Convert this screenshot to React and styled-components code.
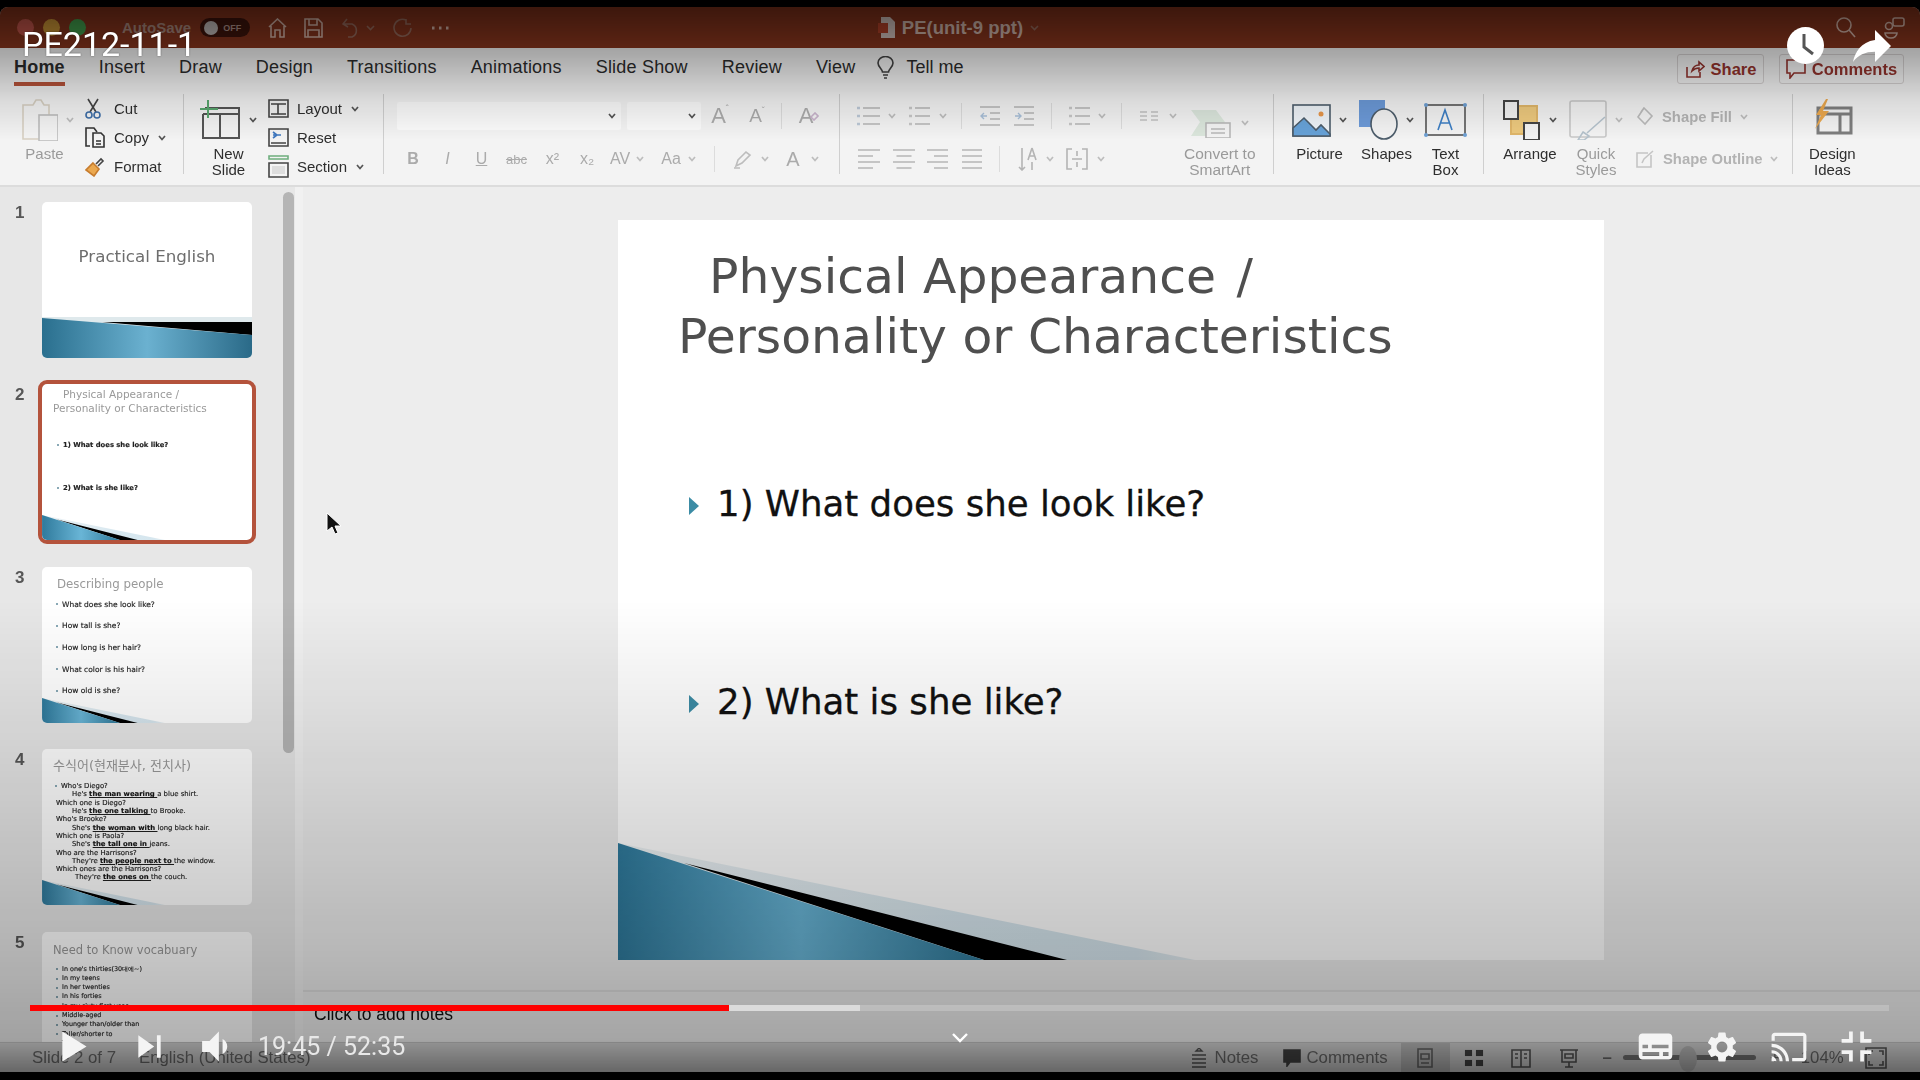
import React from "react";
import styled, { createGlobalStyle } from "styled-components";
import { MdSettings, MdCast } from "react-icons/md";

const Global = createGlobalStyle`
  html, body { margin: 0; padding: 0; background: #000; }
  * { box-sizing: border-box; }
`;

const Screen = styled.div`
  position: relative;
  width: 1920px;
  height: 1080px;
  overflow: hidden;
  background: #000;
  font-family: "Liberation Sans", Arial, sans-serif;
`;

const Video = styled.div`
  display: flex;
  flex-direction: column;
  margin-top: 7px;
  height: 1065px;
  border-radius: 8px 8px 0 0;
  overflow: hidden;
  background: #eee;
  filter: blur(0.6px);
`;

/* title bar */
const TitleBar = styled.div`
  display: grid;
  grid-template-columns: 1fr auto 1fr;
  align-items: center;
  height: 41px;
  flex: none;
  padding: 0 15px 0 17px;
  background: #8a361e;
`;
const TitleLeft = styled.div`
  display: flex;
  align-items: center;
`;
const Light = styled.span`
  width: 17px;
  height: 17px;
  margin-right: 9px;
  border-radius: 50%;
  background: ${(p) => p.$c};
`;
const AutoSave = styled.span`
  margin-left: 27px;
  font-size: 15px;
  font-weight: 700;
  color: #b08c80;
`;
const Toggle = styled.span`
  display: flex;
  align-items: center;
  gap: 5px;
  width: 50px;
  height: 19px;
  margin: 0 18px 0 9px;
  padding-left: 4px;
  border-radius: 10px;
  background: #40150c;
  color: #b89890;
  font-size: 9px;
  font-weight: 700;
  &::before {
    content: "";
    width: 14px;
    height: 14px;
    border-radius: 50%;
    background: #c9c2c0;
  }
`;
const TitleIcon = styled.svg`
  flex: none;
  margin-left: ${(p) => p.$ml || 0}px;
  fill: none;
  stroke: ${(p) => p.$c || "#d9b8ac"};
  stroke-width: 1.6;
`;
const DocTitle = styled.div`
  display: flex;
  align-items: center;
  gap: 7px;
  margin-left: -5px;
  color: #d8bcb2;
  font-size: 18.5px;
  font-weight: 700;
`;
const TitleRight = styled.div`
  display: flex;
  justify-content: flex-end;
  align-items: center;
  gap: 28px;
`;

/* ribbon */
const Ribbon = styled.div`
  flex: none;
  height: 139px;
  background: #f3f3f3;
  border-bottom: 2px solid #dcdcdc;
`;
const TabRow = styled.div`
  display: flex;
  align-items: flex-start;
  gap: 34px;
  height: 39px;
  padding: 0 16px 0 14px;
`;
const Tab = styled.div`
  height: 38px;
  line-height: 38px;
  font-size: 18px;
  letter-spacing: 0.2px;
  color: #2c2c2c;
  font-weight: ${(p) => (p.$active ? 700 : 400)};
  box-shadow: ${(p) => (p.$active ? "inset 0 -4px 0 #b8533a" : "none")};
  white-space: nowrap;
`;
const TellMe = styled(Tab)`
  display: flex;
  align-items: center;
  gap: 12px;
  margin-left: -12px;
  letter-spacing: 0;
`;
const HeadButton = styled.div`
  display: flex;
  align-items: center;
  justify-content: center;
  gap: 6px;
  width: ${(p) => p.$w}px;
  height: 30px;
  margin-top: 6px;
  margin-left: ${(p) => p.$ml};
  border: 1px solid #d4d0d0;
  border-radius: 3px;
  color: #93332d;
  font-size: 16.5px;
  font-weight: 700;
`;
const ToolRow = styled.div`
  display: flex;
  height: 98px;
`;
const Group = styled.div`
  display: flex;
  flex: none;
  width: ${(p) => p.$w}px;
  padding-left: ${(p) => p.$pl}px;
`;
const Sep = styled.div`
  flex: none;
  width: 1px;
  margin: 7px 0 11px;
  background: #cfcfcf;
`;
const Large = styled.div`
  display: flex;
  flex: none;
  flex-direction: column;
  align-items: center;
  margin-left: ${(p) => p.$ml || 0}px;
  padding-top: ${(p) => p.$pt ?? 12}px;
`;
const IconRow = styled.div`
  display: flex;
  align-items: center;
  gap: ${(p) => p.$gap ?? 8}px;
  height: 42px;
  margin-bottom: ${(p) => p.$mb ?? 5}px;
`;
const Label = styled.div`
  padding-right: ${(p) => p.$pr || 0}px;
  font-size: ${(p) => p.$fs || 15}px;
  line-height: 16px;
  text-align: center;
  white-space: nowrap;
  color: ${(p) => (p.$dim ? "#9a9a9a" : "#2e2e2e")};
`;
const SmallCol = styled.div`
  display: flex;
  flex-direction: column;
  flex: none;
  margin-left: ${(p) => p.$ml}px;
  padding-top: 7px;
`;
const SmallRow = styled.div`
  display: flex;
  align-items: center;
  height: 29px;
  font-size: 15px;
  color: #2e2e2e;
`;
const IconBox = styled.span`
  display: flex;
  align-items: center;
  width: 29px;
`;
const ToolCol = styled.div`
  display: flex;
  flex: none;
  flex-direction: column;
  width: ${(p) => p.$w}px;
  padding-top: 15px;
  gap: 15px;
`;
const FillCol = styled(ToolCol)`
  padding-top: 9px;
  gap: 14px;
`;
const ToolLine = styled.div`
  display: flex;
  align-items: center;
  height: 28px;
`;
const Select = styled.div`
  display: flex;
  align-items: center;
  justify-content: flex-end;
  width: ${(p) => p.$w}px;
  height: 28px;
  margin-left: ${(p) => p.$ml || 0}px;
  padding-right: 5px;
  background: #fbfbfb;
  border-radius: 2px;
`;
const Slot = styled.span`
  display: flex;
  flex: none;
  align-items: center;
  justify-content: center;
  width: ${(p) => p.$w}px;
  margin-left: ${(p) => p.$ml || 0}px;
  color: #ababab;
  font-size: ${(p) => p.$fs || 16}px;
  font-weight: ${(p) => p.$fw || 400};
  font-style: ${(p) => p.$fst || "normal"};
  text-decoration: ${(p) => p.$td || "none"};
  white-space: nowrap;
`;
const Tiny = styled.span`
  align-self: flex-start;
  font-size: 9px;
  line-height: 10px;
`;
const MiniSep = styled.span`
  flex: none;
  width: 1px;
  height: 26px;
  margin-left: ${(p) => p.$ml}px;
  background: #dcdcdc;
`;
const Gray = styled.span`
  margin: 0 8px;
  color: #b3b3b3;
  font-size: 14.8px;
  font-weight: 700;
  white-space: nowrap;
`;
const Ico = styled.svg`
  flex: none;
  margin-left: ${(p) => p.$ml || 0}px;
  fill: none;
  stroke: ${(p) => p.$c || "#555"};
  stroke-width: ${(p) => p.$sw || 1.6};
`;

const Chev = ({ dim, ml }) => (
  <Ico width="8" height="6" viewBox="0 0 8 6" $ml={ml} $c={dim ? "#bdbdbd" : "#555"} $sw={1.7}>
    <path d="M1 1l3 3.5L7 1" />
  </Ico>
);

// paragraph align icon, lengths of the short lines depend on the side
const AlignIcon = ({ w, side = "left" }) => {
  const short = w - 7;
  const x = side === "left" ? 0 : side === "right" ? 7 : side === "center" ? 3.5 : 0;
  const len = side === "both" ? w : short;
  return (
    <Ico width={w} height="22" viewBox={`0 0 ${w} 22`} $c="#b6b6b6" $sw={1.4}>
      <path d={`M0 2H${w}M${x} 8h${len}M0 14H${w}M${x} 20h${len}`} />
    </Ico>
  );
};

const ListIcon = ({ w, dots = "#bcc8d6" }) => (
  <Ico width={w} height="22" viewBox={`0 0 ${w} 22`} $c="#b6b6b6" $sw={1.4}>
    <path d={`M7 3H${w}M7 11H${w}M7 19H${w}`} />
    <path d="M1 3h3M1 11h3M1 19h3" stroke={dots} strokeWidth="2.4" />
  </Ico>
);

const IndentIcon = ({ flip }) => (
  <Ico width="20" height="22" viewBox="0 0 20 22" $c="#b6b6b6" $sw={1.4}>
    <path d="M0 2h20M10 8h10M10 14h10M0 20h20" />
    <path d={flip ? "M1 11h6M4 8l3 3-3 3" : "M7 11H1M4 8l-3 3 3 3"} stroke="#a8bfd8" />
  </Ico>
);

/* main */
const Main = styled.div`
  display: flex;
  flex: 1;
  min-height: 0;
`;
const Panel = styled.div`
  position: relative;
  flex: none;
  width: 303px;
  padding: 15px 0 0 0;
  display: flex;
  flex-direction: column;
  gap: 26.4px;
  overflow: hidden;
  background: #e7e7e7;
  border-right: 8px solid #f1f1f1;
`;
const Scrollbar = styled.div`
  position: absolute;
  top: 5px;
  left: 283px;
  width: 11px;
  height: 561px;
  border-radius: 6px;
  background: #b5b5b5;
`;
const ThumbRow = styled.div`
  display: flex;
  flex: none;
  align-items: flex-start;
`;
const ThumbNum = styled.div`
  width: 42px;
  padding: 1px 0 0 15px;
  font-size: 17px;
  font-weight: 700;
  color: #575757;
`;
const Thumb = styled.div`
  position: relative;
  width: 210px;
  height: 156px;
  flex: none;
  overflow: hidden;
  border-radius: 5px;
  background: #fff;
  ${(p) => p.$sel && "outline: 4px solid #b4533c;"}
`;
const ThumbWedge = styled.svg`
  position: absolute;
  left: 0;
  bottom: 0;
  display: block;
`;
const Cover = styled.div`
  padding-top: 44px;
  text-align: center;
  font-family: "DejaVu Sans", sans-serif;
  font-size: 16.7px;
  color: #6d6d6d;
`;
const ThumbTitle = styled.div`
  padding: ${(p) => p.$p};
  font-family: "DejaVu Sans", "Noto Sans CJK KR", sans-serif;
  font-size: ${(p) => p.$fs}px;
  line-height: ${(p) => p.$lh || 14}px;
  color: #999;
  white-space: pre;
`;
const ThumbLine = styled.div`
  position: relative;
  padding-left: ${(p) => p.$pl}px;
  margin-top: ${(p) => p.$mt || 0}px;
  height: ${(p) => p.$h}px;
  line-height: ${(p) => p.$h}px;
  font-family: "DejaVu Sans", sans-serif;
  font-size: ${(p) => p.$fs}px;
  font-weight: ${(p) => p.$fw || 400};
  color: #222;
  -webkit-text-stroke: 0.15px #222;
  white-space: pre;
  b {
    text-decoration: underline;
    color: #111;
  }
  ${(p) =>
    p.$dot &&
    `&::before {
      content: "";
      position: absolute;
      left: ${p.$pl - 6}px;
      top: 40%;
      width: 2px;
      height: 2px;
      background: #8aa9b6;
    }`}
`;

const Editor = styled.div`
  display: flex;
  flex: 1;
  flex-direction: column;
  min-width: 0;
  background: #ededed;
`;
const Stage = styled.div`
  flex: 1;
  padding: 33px 0 0 315px;
`;
const Slide = styled.div`
  position: relative;
  width: 986px;
  height: 740px;
  background: #fff;
`;
const SlideTitle = styled.div`
  padding: 27px 0 0 60px;
  font-family: "DejaVu Sans", sans-serif;
  font-size: 48.8px;
  line-height: 60px;
  color: #4f4f4f;
  white-space: pre;
`;
const Bullet = styled.div`
  display: flex;
  align-items: center;
  gap: 18px;
  height: 50px;
  margin-top: ${(p) => p.$mt}px;
  padding-left: 71px;
  font-family: "DejaVu Sans", sans-serif;
  font-size: 35.6px;
  color: #111;
  -webkit-text-stroke: 0.3px #111;
  &::before {
    content: "";
    width: 0;
    height: 0;
    margin-top: 6px;
    border-left: 10px solid #3c8ca5;
    border-top: 9px solid transparent;
    border-bottom: 9px solid transparent;
  }
`;
const Wedge = styled.svg`
  position: absolute;
  left: 0;
  bottom: 0;
  display: block;
`;
const Notes = styled.div`
  flex: none;
  height: 52px;
  padding: 12px 0 0 11px;
  border-top: 2px solid #dfdfdf;
  color: #111;
  font-size: 17.5px;
`;
const Status = styled.div`
  display: flex;
  flex: none;
  align-items: center;
  height: 30px;
  padding: 0 0 0 32px;
  background: #d6d6d6;
  border-top: 1px solid #c4c4c4;
  color: #6c6c6c;
  font-size: 16.8px;
`;
const StatusItem = styled.span`
  display: flex;
  align-items: center;
  gap: ${(p) => p.$gap || 0}px;
  margin-left: ${(p) => p.$ml || 0}px;
  font-weight: ${(p) => p.$fw || 400};
  white-space: nowrap;
`;
const ViewBtn = styled.span`
  display: flex;
  align-items: center;
  justify-content: center;
  flex: none;
  width: 49px;
  height: 30px;
  margin-left: ${(p) => p.$ml || 0}px;
  background: ${(p) => (p.$on ? "#bcbcbc" : "transparent")};
`;
const Slider = styled.span`
  position: relative;
  flex: none;
  width: 133px;
  height: 5px;
  margin: 0 14px 0 11px;
  border-radius: 3px;
  background: #777;
  &::after {
    content: "";
    position: absolute;
    left: 56px;
    top: -9px;
    width: 18px;
    height: 26px;
    border-radius: 50%;
    background: #bdbdbd;
  }
`;

/* youtube layer */
const Shade = styled.div`
  position: absolute;
  inset: 0;
  pointer-events: none;
  background:
    linear-gradient(rgba(0,0,0,.6) 0, rgba(0,0,0,.32) 50px, rgba(0,0,0,.1) 100px, rgba(0,0,0,0) 140px),
    linear-gradient(rgba(0,0,0,0) 600px, rgba(0,0,0,.114) 780px, rgba(0,0,0,.23) 960px, rgba(0,0,0,.3) 1040px, rgba(0,0,0,.52) 1072px);
`;
const VideoTitle = styled.div`
  position: absolute;
  left: 22px;
  top: 24px;
  color: #fff;
  font-family: Roboto, sans-serif;
  font-size: 34px;
  line-height: 40px;
  text-shadow: 0 0 2px rgba(0,0,0,.5);
`;
const TopIcon = styled.svg`
  position: absolute;
  left: ${(p) => p.$x}px;
  top: ${(p) => p.$y}px;
`;
const Progress = styled.div`
  position: absolute;
  left: 30px;
  top: 1005px;
  width: 1859px;
  height: 6px;
  background: rgba(255, 255, 255, 0.2);
`;
const Fill = styled.div`
  position: absolute;
  left: 0;
  top: 0;
  height: 100%;
  width: ${(p) => p.$w}px;
  background: ${(p) => p.$c};
`;
const Controls = styled.div`
  position: absolute;
  left: 0;
  right: 0;
  top: 1013px;
  height: 67px;
  display: flex;
  align-items: center;
  padding: 0 30px 0 40px;
  color: #fff;
`;
const Ctl = styled.svg`
  flex: none;
  margin-left: ${(p) => p.$ml || 0}px;
  fill: #f4f4f4;
`;
const Time = styled.div`
  margin-left: 11px;
  font-family: Roboto, sans-serif;
  font-size: 25px;
  color: #e8e8e8;
  white-space: nowrap;
`;
const CtlRight = styled.div`
  display: flex;
  align-items: center;
  margin-left: auto;
  svg {
    flex: none;
  }
`;
const Caret = styled.svg`
  position: absolute;
  left: 951px;
  top: 20px;
  fill: none;
  stroke: #fff;
  stroke-width: 2.4;
`;
const Cursor = styled.svg`
  position: absolute;
  left: 326px;
  top: 512px;
`;

const WedgeShape = ({ id, width, As = ThumbWedge }) => (
  <As width={width} height={(width * 117) / 986} viewBox="0 0 986 117">
    <defs>
      <linearGradient id={id} x1="0" x2="366" y1="0" y2="0" gradientUnits="userSpaceOnUse">
        <stop offset="0" stopColor="#2f7a9c" />
        <stop offset="0.5" stopColor="#69b5d6" />
        <stop offset="1" stopColor="#2f7898" />
      </linearGradient>
      <linearGradient id={`${id}g`} x1="0" x2="577" y1="0" y2="0" gradientUnits="userSpaceOnUse">
        <stop offset="0" stopColor="#eef3f5" />
        <stop offset="0.6" stopColor="#d8e8f0" />
        <stop offset="0.9" stopColor="#d6e6ee" />
        <stop offset="1" stopColor="#e6eef2" />
      </linearGradient>
    </defs>
    <polygon points="0,0 577,117 0,117" fill={`url(#${id}g)`} />
    <polygon points="66,20 449,117 366,117" fill="#000" />
    <polygon points="0,0 366,117 0,117" fill={`url(#${id})`} />
  </As>
);

const FirstBand = () => (
  <ThumbWedge width="210" height="41" viewBox="0 0 210 41">
    <defs>
      <linearGradient id="bandBlue" x1="0" x2="1" y1="0" y2="0">
        <stop offset="0" stopColor="#2a6f8e" />
        <stop offset="0.5" stopColor="#6bb1d0" />
        <stop offset="1" stopColor="#2a6a88" />
      </linearGradient>
    </defs>
    <polygon points="0,0 210,0 210,41 0,41" fill="#dfe9ec" />
    <polygon points="60,5 210,5 210,18" fill="#000" />
    <polygon points="0,1 210,18 210,41 0,41" fill="url(#bandBlue)" />
  </ThumbWedge>
);

const People = [
  "What does she look like?",
  "How tall is she?",
  "How long is her hair?",
  "What color is his hair?",
  "How old is she?",
];

const Vocab = [
  "In one's thirties(30대에~)",
  "In my teens",
  "In her twenties",
  "In his forties",
  "In my sixty-first year",
  "Middle-aged",
  "Younger than/older than",
  "Taller/shorter to",
  "Tall",
];

export default function App() {
  return (
    <Screen>
      <Global />
      <Video>
        <TitleBar>
          <TitleLeft>
            <Light $c="#c9584d" />
            <Light $c="#d29a38" />
            <Light $c="#46a650" />
            <AutoSave>AutoSave</AutoSave>
            <Toggle>OFF</Toggle>
            <TitleIcon width="19" height="20" viewBox="0 0 19 20">
              <path d="M1 9l8.5-8L18 9M3 8v11h4v-7h5v7h4V8" />
            </TitleIcon>
            <TitleIcon width="19" height="20" viewBox="0 0 19 20" $ml={17}>
              <path d="M1 1h13l4 4v14H1zM5 1v6h8V1M4 19v-7h11v7" />
            </TitleIcon>
            <TitleIcon width="19" height="20" viewBox="0 0 19 20" $ml={19} $c="#9c6e5f">
              <path d="M5 1L1 6l5 3M1 6h9a7 7 0 0 1 0 13H6" />
            </TitleIcon>
            <TitleIcon width="9" height="6" viewBox="0 0 9 6" $ml={5} $c="#9c6e5f">
              <path d="M1 1l3.5 3.5L8 1" />
            </TitleIcon>
            <TitleIcon width="20" height="20" viewBox="0 0 20 20" $ml={18} $c="#9c6e5f">
              <path d="M13 2a8.5 8.5 0 1 0 5 8M13 1v5h5" />
            </TitleIcon>
            <TitleIcon width="18" height="4" viewBox="0 0 18 4" $ml={18} $c="#d9b8ac">
              <path d="M1 2h2.5M8 2h2.5M15 2h2.5" strokeWidth="3" />
            </TitleIcon>
          </TitleLeft>
          <DocTitle>
            <svg width="17" height="21" viewBox="0 0 17 21">
              <path d="M3 0h9l5 5v16H3z" fill="#d8c8c2" />
              <rect x="0" y="6" width="10" height="10" fill="#b9442a" />
            </svg>
            PE(unit-9 ppt)
            <TitleIcon width="9" height="6" viewBox="0 0 9 6" $c="#9c6e5f">
              <path d="M1 1l3.5 3.5L8 1" />
            </TitleIcon>
          </DocTitle>
          <TitleRight>
            <TitleIcon width="20" height="21" viewBox="0 0 20 21">
              <circle cx="8" cy="8" r="7" />
              <path d="M13 13l6 7" />
            </TitleIcon>
            <TitleIcon width="21" height="22" viewBox="0 0 21 22">
              <rect x="9" y="1" width="11" height="8" rx="2" />
              <circle cx="5" cy="9" r="3.5" />
              <path d="M1 16h12a6 5 0 0 1-12 0z" />
            </TitleIcon>
          </TitleRight>
        </TitleBar>

        <Ribbon>
          <TabRow>
            <Tab $active>Home</Tab>
            <Tab>Insert</Tab>
            <Tab>Draw</Tab>
            <Tab>Design</Tab>
            <Tab>Transitions</Tab>
            <Tab>Animations</Tab>
            <Tab>Slide Show</Tab>
            <Tab>Review</Tab>
            <Tab>View</Tab>
            <TellMe>
              <Ico width="17" height="23" viewBox="0 0 17 23" $c="#444">
                <path d="M5.5 16c0-3-4.5-5-4.5-9a7.5 6.5 0 0 1 15 0c0 4-4.5 6-4.5 9zM6 19h5M7 22h3" />
              </Ico>
              Tell me
            </TellMe>
            <HeadButton $w={87} $ml="auto">
              <Ico width="20" height="18" viewBox="0 0 20 18" $c="#93332d">
                <path d="M2 7v10h13v-5M7 11c1-4 4-6 7-6V2l5 4.5L14 11V8c-3 0-5 1-7 3z" />
              </Ico>
              Share
            </HeadButton>
            <HeadButton $w={125} $ml="-19px">
              <Ico width="20" height="20" viewBox="0 0 20 20" $c="#93332d">
                <path d="M1 1h18v13H8l-4 5v-5H1z" />
              </Ico>
              Comments
            </HeadButton>
          </TabRow>

          <ToolRow>
            <Group $w={183} $pl={22}>
              <Large>
                <IconRow>
                  <Ico width="36" height="42" viewBox="0 0 36 42" $c="#d7d0c2">
                    <path d="M1 6h10l3-5h5l3 5h5v34H1z" />
                    <rect x="17" y="16" width="19" height="26" fill="#f3f3f3" stroke="#bdbdbd" />
                  </Ico>
                  <Chev dim />
                </IconRow>
                <Label $dim $pr={7}>Paste</Label>
              </Large>
              <SmallCol $ml={11}>
                <SmallRow>
                  <IconBox>
                    <Ico width="16" height="21" viewBox="0 0 16 21" $c="#444">
                      <path d="M3 1l8 13M13 1L5 14" />
                      <circle cx="4" cy="17" r="3" stroke="#3f6fa8" />
                      <circle cx="12" cy="17" r="3" stroke="#3f6fa8" />
                    </Ico>
                  </IconBox>
                  Cut
                </SmallRow>
                <SmallRow>
                  <IconBox>
                    <Ico width="20" height="21" viewBox="0 0 20 21" $c="#333">
                      <path d="M5 19H1V1h8l3 4" />
                      <path d="M8 6h8l3 3v11H8zM11 14h5M11 17h5" />
                    </Ico>
                  </IconBox>
                  Copy
                  <Chev ml={9} />
                </SmallRow>
                <SmallRow>
                  <IconBox>
                    <Ico width="20" height="20" viewBox="0 0 20 20" $c="#444">
                      <path d="M8 6l6 6-5 7-8-6z" fill="#eba84e" stroke="#c77c2e" />
                      <path d="M11 7l5-5 2 2-5 5" />
                    </Ico>
                  </IconBox>
                  Format
                </SmallRow>
              </SmallCol>
            </Group>
            <Sep />
            <Group $w={199} $pl={16}>
              <Large>
                <IconRow $gap={9}>
                  <Ico width="40" height="40" viewBox="0 0 40 40" $c="#555" $sw={2}>
                    <path d="M5 8h34v30H3V14M3 14h36M20 14v24" />
                    <path d="M8 0v18M0 9h18" stroke="#5aa86f" />
                  </Ico>
                  <Chev />
                </IconRow>
                <Label>New<br />Slide</Label>
              </Large>
              <SmallCol $ml={11}>
                <SmallRow>
                  <IconBox>
                    <Ico width="21" height="19" viewBox="0 0 21 19" $c="#444">
                      <path d="M1 1h19v17H1zM3 5h15M10 5v10M3 15h15" />
                    </Ico>
                  </IconBox>
                  Layout
                  <Chev ml={9} />
                </SmallRow>
                <SmallRow>
                  <IconBox>
                    <Ico width="21" height="19" viewBox="0 0 21 19" $c="#444">
                      <path d="M1 1h19v17H1zM3 15h15" />
                      <path d="M5 4l4 3-4 3M5 7h8" stroke="#3f78c0" />
                    </Ico>
                  </IconBox>
                  Reset
                </SmallRow>
                <SmallRow>
                  <IconBox>
                    <Ico width="21" height="23" viewBox="0 0 21 23" $c="#444">
                      <path d="M1 1h19v3H1z" stroke="#6fae7e" />
                      <path d="M1 8h19v14H1z" />
                      <path d="M4 11h13v8H4z" fill="#ddd" stroke="none" />
                    </Ico>
                  </IconBox>
                  Section
                  <Chev ml={9} />
                </SmallRow>
              </SmallCol>
            </Group>
            <Sep />
            <Group $w={455} $pl={13}>
              <ToolCol $w={440}>
                <ToolLine>
                  <Select $w={224}><Chev /></Select>
                  <Select $w={74} $ml={6}><Chev /></Select>
                  <Slot $w={22} $ml={8} $fs={22}>A<Tiny>ˆ</Tiny></Slot>
                  <Slot $w={22} $ml={15} $fs={19}>A<Tiny>ˇ</Tiny></Slot>
                  <MiniSep $ml={13} />
                  <Slot $w={22} $ml={16} $fs={22}>
                    A
                    <Ico width="9" height="9" viewBox="0 0 9 9" $c="#c9b4cc" $ml={-3}>
                      <path d="M1 5l4-4 3 3-4 4z" />
                    </Ico>
                  </Slot>
                </ToolLine>
                <ToolLine>
                  <Slot $w={10} $ml={11} $fw={700}>B</Slot>
                  <Slot $w={9} $ml={25} $fst="italic">I</Slot>
                  <Slot $w={11} $ml={24} $td="underline">U</Slot>
                  <Slot $w={23} $ml={18} $fs={13} $td="line-through">abc</Slot>
                  <Slot $w={11} $ml={19}>x²</Slot>
                  <Slot $w={10} $ml={24}>x₂</Slot>
                  <Slot $w={20} $ml={18}>AV</Slot>
                  <Slot $w={8} $ml={6}><Chev dim /></Slot>
                  <Slot $w={22} $ml={16}>Aa</Slot>
                  <Slot $w={8} $ml={6}><Chev dim /></Slot>
                  <MiniSep $ml={18} />
                  <Slot $w={19} $ml={18}>
                    <Ico width="19" height="19" viewBox="0 0 19 19" $c="#bdbdbd">
                      <path d="M3 16l2-6 8-8 4 3-8 8zM1 18h6" />
                    </Ico>
                  </Slot>
                  <Slot $w={8} $ml={9}><Chev dim /></Slot>
                  <Slot $w={14} $ml={17} $fs={20}>A</Slot>
                  <Slot $w={8} $ml={11}><Chev dim /></Slot>
                </ToolLine>
              </ToolCol>
            </Group>
            <Sep />
            <Group $w={433} $pl={16}>
              <ToolCol $w={328}>
                <ToolLine>
                  <Slot $w={24}><ListIcon w={24} /></Slot>
                  <Slot $w={8} $ml={8}><Chev dim /></Slot>
                  <Slot $w={22} $ml={12}><ListIcon w={22} dots="#c6c6c6" /></Slot>
                  <Slot $w={8} $ml={9}><Chev dim /></Slot>
                  <MiniSep $ml={14} />
                  <Slot $w={20} $ml={18}><IndentIcon /></Slot>
                  <Slot $w={20} $ml={14}><IndentIcon flip /></Slot>
                  <MiniSep $ml={17} />
                  <Slot $w={22} $ml={16}><ListIcon w={22} dots="#c6c6c6" /></Slot>
                  <Slot $w={8} $ml={8}><Chev dim /></Slot>
                  <MiniSep $ml={15} />
                  <Slot $w={18} $ml={18}>
                    <Ico width="18" height="10" viewBox="0 0 18 10" $c="#c2c2c2" $sw={1.4}>
                      <path d="M0 1h7M11 1h7M0 5h7M11 5h7M0 9h7M11 9h7" />
                    </Ico>
                  </Slot>
                  <Slot $w={8} $ml={11}><Chev dim /></Slot>
                </ToolLine>
                <ToolLine>
                  <Slot $w={22} $ml={2}><AlignIcon w={22} /></Slot>
                  <Slot $w={22} $ml={13}><AlignIcon w={22} side="center" /></Slot>
                  <Slot $w={21} $ml={12}><AlignIcon w={21} side="right" /></Slot>
                  <Slot $w={20} $ml={14}><AlignIcon w={20} side="both" /></Slot>
                  <MiniSep $ml={17} />
                  <Slot $w={20} $ml={18} $fs={15}>
                    <Ico width="20" height="24" viewBox="0 0 20 24" $c="#b4b4b4">
                      <path d="M4 1v22M1 20l3 3 3-3M14 1l-4 12M14 1l4 12M11 9h6M14 15v8" />
                    </Ico>
                  </Slot>
                  <Slot $w={8} $ml={8}><Chev dim /></Slot>
                  <Slot $w={22} $ml={12}>
                    <Ico width="22" height="22" viewBox="0 0 22 22" $c="#b4b4b4">
                      <path d="M6 1H1v20h5M16 1h5v20h-5M6 11h10M11 3v5M11 14v5" />
                    </Ico>
                  </Slot>
                  <Slot $w={8} $ml={9}><Chev dim /></Slot>
                </ToolLine>
              </ToolCol>
              <Large $pt={15}>
                <IconRow $gap={10} $mb={2}>
                  <Ico width="41" height="30" viewBox="0 0 39 30" $c="#b9b9b9">
                    <path d="M0 2h25l9 12-9 14H0l9-14z" fill="#dbe6dc" stroke="none" />
                    <rect x="15" y="15" width="24" height="15" fill="#f3f3f3" />
                    <path d="M20 21h14M20 25h14" />
                  </Ico>
                  <Chev dim />
                </IconRow>
                <Label $dim $fs={15.5}>Convert to<br />SmartArt</Label>
              </Large>
            </Group>
            <Sep />
            <Group $w={209} $pl={18}>
              <Large>
                <IconRow>
                  <Ico width="39" height="33" viewBox="0 0 39 33" $c="#4d5d6b">
                    <rect x="1" y="1" width="37" height="31" fill="#eef3f8" />
                    <path d="M1 32V24l11-10 12 12 5-5 9 9v2z" fill="#67a2d8" />
                    <circle cx="29" cy="10" r="2.5" fill="#e7964b" stroke="none" />
                  </Ico>
                  <Chev />
                </IconRow>
                <Label>Picture</Label>
              </Large>
              <Large $ml={12}>
                <IconRow>
                  <Ico width="39" height="40" viewBox="0 0 39 40" $c="#4d5d6b">
                    <rect x="0" y="0" width="26" height="27" fill="#6c9ad8" stroke="none" />
                    <ellipse cx="25" cy="24" rx="13" ry="15" fill="#f3f3f3" />
                  </Ico>
                  <Chev />
                </IconRow>
                <Label>Shapes</Label>
              </Large>
              <Large $ml={10}>
                <IconRow $gap={0}>
                  <Ico width="43" height="34" viewBox="0 0 43 34" $c="#555">
                    <rect x="2" y="2" width="39" height="30" />
                    <path d="M14 27l7-20 7 20M17 20h8" stroke="#3e7fc4" />
                    <circle cx="2" cy="2" r="2" fill="#6ea0d4" stroke="none" />
                    <circle cx="41" cy="2" r="2" fill="#6ea0d4" stroke="none" />
                    <circle cx="2" cy="32" r="2" fill="#6ea0d4" stroke="none" />
                    <circle cx="41" cy="32" r="2" fill="#6ea0d4" stroke="none" />
                  </Ico>
                </IconRow>
                <Label>Text<br />Box</Label>
              </Large>
            </Group>
            <Sep />
            <Group $w={308} $pl={19}>
              <Large>
                <IconRow>
                  <Ico width="38" height="40" viewBox="0 0 38 40" $c="#444" $sw={2}>
                    <rect x="8" y="6" width="26" height="28" fill="#edc97e" stroke="#e0b66a" />
                    <rect x="1" y="1" width="14" height="18" fill="#f3f3f3" />
                    <rect x="21" y="23" width="15" height="17" fill="#f3f3f3" />
                  </Ico>
                  <Chev />
                </IconRow>
                <Label>Arrange</Label>
              </Large>
              <Large $ml={12}>
                <IconRow>
                  <Ico width="38" height="40" viewBox="0 0 38 40" $c="#c8c8c8">
                    <rect x="1" y="1" width="36" height="36" rx="2" />
                    <path d="M36 17L18 33M14 32l6 4-5 4h-6z" stroke="#b4c2cc" />
                  </Ico>
                  <Chev dim />
                </IconRow>
                <Label $dim>Quick<br />Styles</Label>
              </Large>
              <SmallCol $ml={13}>
                <FillCol $w={150}>
                  <ToolLine>
                    <Ico width="18" height="20" viewBox="0 0 18 20" $c="#bbb"><path d="M8 1l8 8-7 8-7-7zM5 5l3-4" /></Ico>
                    <Gray>Shape Fill</Gray>
                    <Chev dim />
                  </ToolLine>
                  <ToolLine>
                    <Ico width="19" height="18" viewBox="0 0 19 18" $c="#c5c5c5"><path d="M15 5v12H1V3h11M6 13l2-4 9-8" /></Ico>
                    <Gray>Shape Outline</Gray>
                    <Chev dim />
                  </ToolLine>
                </FillCol>
              </SmallCol>
            </Group>
            <Sep />
            <Group $w={127} $pl={16}>
              <Large $pt={10}>
                <IconRow $mb={7}>
                  <Ico width="41" height="38" viewBox="0 0 41 38" $c="#7e7e7e" $sw={3}>
                    <path d="M6 9h33v25H6zM6 15h33M28 15v19" />
                    <path d="M14 0L4 16h5L3 30l14-18h-6l5-12z" fill="#eba84e" stroke="none" />
                  </Ico>
                </IconRow>
                <Label>Design<br />Ideas</Label>
              </Large>
            </Group>
          </ToolRow>
        </Ribbon>

        <Main>
          <Panel>
            <Scrollbar />
            <ThumbRow>
              <ThumbNum>1</ThumbNum>
              <Thumb>
                <Cover>Practical English</Cover>
                <FirstBand />
              </Thumb>
            </ThumbRow>
            <ThumbRow>
              <ThumbNum>2</ThumbNum>
              <Thumb $sel>
                <ThumbTitle $p="3px 0 0 11px" $fs={10.5}>{"   Physical Appearance /\nPersonality or Characteristics"}</ThumbTitle>
                <ThumbLine $dot $pl={21} $mt={25} $h={10} $fs={6.8} $fw={700}>1) What does she look like?</ThumbLine>
                <ThumbLine $dot $pl={21} $mt={33} $h={10} $fs={6.8} $fw={700}>2) What is she like?</ThumbLine>
                <WedgeShape id="w2" width={210} />
              </Thumb>
            </ThumbRow>
            <ThumbRow>
              <ThumbNum>3</ThumbNum>
              <Thumb>
                <ThumbTitle $p="9px 0 0 15px" $fs={11.8} $lh={16}>Describing people</ThumbTitle>
                {People.map((t, i) => (
                  <ThumbLine $dot key={t} $pl={20} $mt={i === 0 ? 7 : 10.6} $h={11} $fs={7.5}>{t}</ThumbLine>
                ))}
                <WedgeShape id="w3" width={210} />
              </Thumb>
            </ThumbRow>
            <ThumbRow>
              <ThumbNum>4</ThumbNum>
              <Thumb>
                <ThumbTitle $p="9px 0 0 11px" $fs={13} $lh={16}>수식어(현재분사, 전치사)</ThumbTitle>
                <ThumbLine $dot $pl={19} $mt={8} $h={8.3} $fs={6.9}>Who's Diego?</ThumbLine>
                <ThumbLine $pl={30} $h={8.3} $fs={6.9}>He's <b>the man wearing </b>a blue shirt.</ThumbLine>
                <ThumbLine $pl={14} $h={8.3} $fs={6.9}>Which one is Diego?</ThumbLine>
                <ThumbLine $pl={30} $h={8.3} $fs={6.9}>He's <b>the one talking </b>to Brooke.</ThumbLine>
                <ThumbLine $pl={14} $h={8.3} $fs={6.9}>Who's Brooke?</ThumbLine>
                <ThumbLine $pl={30} $h={8.3} $fs={6.9}>She's <b>the woman with </b>long black hair.</ThumbLine>
                <ThumbLine $pl={14} $h={8.3} $fs={6.9}>Which one is Paola?</ThumbLine>
                <ThumbLine $pl={30} $h={8.3} $fs={6.9}>She's <b>the tall one in </b>jeans.</ThumbLine>
                <ThumbLine $pl={14} $h={8.3} $fs={6.9}>Who are the Harrisons?</ThumbLine>
                <ThumbLine $pl={30} $h={8.3} $fs={6.9}>They're <b>the people next to </b>the window.</ThumbLine>
                <ThumbLine $pl={14} $h={8.3} $fs={6.9}>Which ones are the Harrisons?</ThumbLine>
                <ThumbLine $pl={33} $h={8.3} $fs={6.9}>They're <b>the ones on </b>the couch.</ThumbLine>
                <WedgeShape id="w4" width={210} />
              </Thumb>
            </ThumbRow>
            <ThumbRow>
              <ThumbNum>5</ThumbNum>
              <Thumb>
                <ThumbTitle $p="10px 0 0 11px" $fs={11.5} $lh={16}>Need to Know vocabuary</ThumbTitle>
                {Vocab.map((t, i) => (
                  <ThumbLine $dot key={t} $pl={20} $mt={i === 0 ? 7 : 0} $h={9.3} $fs={6.4}>{t}</ThumbLine>
                ))}
              </Thumb>
            </ThumbRow>
          </Panel>

          <Editor>
            <Stage>
              <Slide>
                <SlideTitle>{"  Physical Appearance \u200a/\nPersonality or Characteristics"}</SlideTitle>
                <Bullet $mt={111}>1) What does she look like?</Bullet>
                <Bullet $mt={148}>2) What is she like?</Bullet>
                <WedgeShape id="w1" width={986} As={Wedge} />
              </Slide>
            </Stage>
            <Notes>Click to add notes</Notes>
          </Editor>
        </Main>

        <Status>
          <StatusItem>Slide 2 of 7</StatusItem>
          <StatusItem $ml={23}>English (United States)</StatusItem>
          <StatusItem $ml={881} $gap={9}>
            <Ico width="14" height="20" viewBox="0 0 14 20" $c="#555" $sw={1.4}><path d="M7 0l3 3H4zM0 7h14M0 11h14M0 15h14M0 19h14" /></Ico>
            Notes
          </StatusItem>
          <StatusItem $ml={25} $gap={5}>
            <Ico width="18" height="18" viewBox="0 0 18 18" $c="#444"><path d="M1 1h16v12H7l-3 4v-4H1z" fill="#444" /></Ico>
            Comments
          </StatusItem>
          <ViewBtn $on $ml={13}>
            <Ico width="18" height="20" viewBox="0 0 18 20" $c="#666"><path d="M2 1h14v18H2zM5 6h8v5H5zM5 15h8" /></Ico>
          </ViewBtn>
          <ViewBtn>
            <Ico width="20" height="18" viewBox="0 0 20 18" $c="#444" $sw={0.1}><path d="M1 1h7v6H1zM12 1h7v6h-7zM1 11h7v6H1zM12 11h7v6h-7z" fill="#444" /></Ico>
          </ViewBtn>
          <ViewBtn $ml={-2}>
            <Ico width="20" height="20" viewBox="0 0 20 20" $c="#555"><path d="M1 2h18v17H1zM10 2v17M4 6h3M13 6h3M4 10h3M13 10h3" /></Ico>
          </ViewBtn>
          <ViewBtn $ml={-1}>
            <Ico width="20" height="20" viewBox="0 0 20 20" $c="#555"><path d="M1 2h18M3 2v12h14V2M10 14v5M6 19h8M6 6h8v4H6z" /></Ico>
          </ViewBtn>
          <StatusItem $ml={9} $fw={700}>–</StatusItem>
          <Slider />
          <StatusItem>+</StatusItem>
          <StatusItem $ml={21}>104%</StatusItem>
          <StatusItem $ml={21}>
            <Ico width="22" height="22" viewBox="0 0 22 22" $c="#555"><path d="M1 1h20v20H1zM4 8V4h4M18 8V4h-4M4 14v4h4M18 14v4h-4" /></Ico>
          </StatusItem>
        </Status>
      </Video>

      <Shade />
      <Cursor width="18" height="24" viewBox="0 0 18 24">
        <path d="M1 1v18l5-4 3 7 3-1-3-7h6z" fill="#111" stroke="#fff" strokeWidth="1" />
      </Cursor>
      <VideoTitle>PE212-11-1</VideoTitle>
      <TopIcon $x={1787} $y={27} width="37" height="37" viewBox="0 0 37 37">
        <circle cx="18.5" cy="18.5" r="18.5" fill="#fff" />
        <path d="M17 7v13l9 7" fill="none" stroke="#555" strokeWidth="3" />
      </TopIcon>
      <TopIcon $x={1849} $y={24} width="48" height="48" viewBox="0 0 24 24">
        <path d="M21 11l-8-8v5C6 9 3 14 2 19c2.5-3.5 6-5.1 11-5.1V19l8-8z" fill="#fff" />
      </TopIcon>

      <Progress>
        <Fill $w={830} $c="rgba(255,255,255,.45)" />
        <Fill $w={699} $c="#f00" />
      </Progress>

      <Controls>
        <Ctl width="67" height="67" viewBox="0 0 36 36">
          <path d="M12 26l6.5-4V14L12 10zM18.5 22L25 18l-6.5-4z" />
        </Ctl>
        <Ctl width="67" height="67" viewBox="0 0 36 36" $ml={9}>
          <path d="M12 24l8.5-6L12 12zM22 12v12h2V12z" />
        </Ctl>
        <Ctl width="60" height="67" viewBox="0 0 32 36" $ml={4}>
          <path d="M8 21h4l5 5V10l-5 5H8zM19 14v8c1.48-.68 2.5-2.23 2.5-4 0-1.74-1.02-3.26-2.5-4z" />
        </Ctl>
        <Time>19:45 / 52:35</Time>
        <Caret width="18" height="10" viewBox="0 0 18 10">
          <path d="M2 1l7 7 7-7" />
        </Caret>
        <CtlRight>
          <Ctl width="67" height="67" viewBox="0 0 36 36" fillRule="evenodd">
            <path d="M11 11c-1.11 0-2 .9-2 2v10c0 1.1.89 2 2 2h14c1.1 0 2-.9 2-2V13c0-1.1-.9-2-2-2zm0 6h3v2h-3zm9 6h-9v-2h9zm5 0h-3v-2h3zm0-4h-9v-2h9z" />
          </Ctl>
          <MdSettings size={36} color="#f4f4f4" style={{ marginLeft: 15 }} />
          <MdCast size={38} color="#f4f4f4" style={{ marginLeft: 30 }} />
          <Ctl width="67" height="67" viewBox="0 0 36 36" $ml={15}>
            <path d="M14 14h-4v2h6v-6h-2zM22 14v-4h-2v6h6v-2zM20 26h2v-4h4v-2h-6zM10 22h4v4h2v-6h-6z" />
          </Ctl>
        </CtlRight>
      </Controls>
    </Screen>
  );
}
